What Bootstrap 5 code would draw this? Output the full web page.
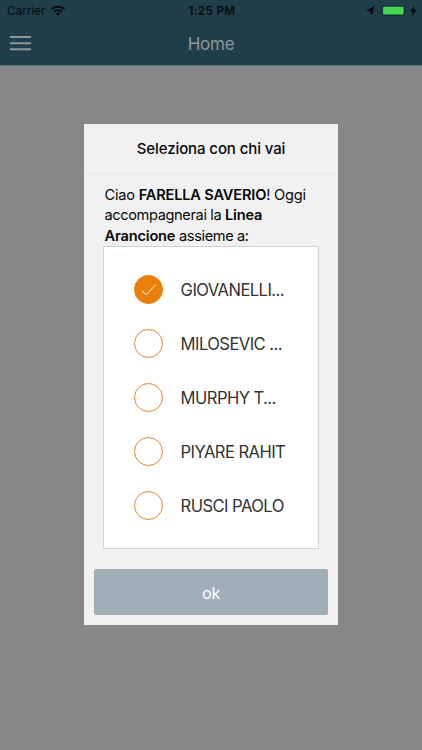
<!DOCTYPE html>
<html lang="it">
<head>
<meta charset="utf-8">
<meta name="viewport" content="width=device-width, initial-scale=1">
<title>Home</title>
<link href="https://cdn.jsdelivr.net/npm/bootstrap@5.3.0/dist/css/bootstrap.min.css" rel="stylesheet">
<style>
body{font-family:Inter,"Liberation Sans",sans-serif;background:#878787;height:750px;overflow:hidden;color:#080808}
.topbar{background:#213f4a;height:66px;border-bottom:1px solid #56707c}
.status{height:22px;font-size:12px;line-height:22px;color:#050b0d;display:grid;grid-template-columns:1fr auto 1fr}
.status-left{padding-left:7px}
.status-right{padding-right:5px}
.carrier{letter-spacing:-.15px}
.wifi{margin-left:6px}
.clock{font-weight:600;letter-spacing:.35px;font-size:11.7px;padding-left:2px}
.titlebar{height:43px;display:grid;grid-template-columns:1fr auto 1fr}
.menu-btn{width:21px;height:15px;margin-left:10px}
.page-title{font-size:17px;line-height:42px;color:#8f979a;letter-spacing:-.25px}
.dialog{width:254px;height:501px;margin:58px auto 0 84px;padding-bottom:10px;background:#f1f1f1}
.dialog-head{height:50px;line-height:50px;font-size:15px;font-weight:500;letter-spacing:-.1px;border-bottom:1px solid #e8e8e8}
.message{padding:11px 0 0 20.5px;height:72px;font-size:14.6px;line-height:20.4px;letter-spacing:-.38px}
.message b{font-weight:600;letter-spacing:-.17px}
.greeting{letter-spacing:-.22px}
.people{margin:0 19px;height:303px;background:#fff;border:1px solid #d2d2d2;padding:16px 0 0 30px}
.person{height:54px;color:#333;font-size:16.6px;letter-spacing:-.57px}
.ring{width:29px;height:29px;margin-bottom:1px;border:1.2px solid #e8872a}
.ring-on{background:#eb7f0b;border-color:#eb7f0b}
.person-name{margin-left:17.6px}
.ok-btn{margin:20px 10px 0;padding:2px 0 0;height:46px;background:#a0aeb7;border-radius:2px;border:0;color:#fff;font-size:16.3px;letter-spacing:-.4px;width:234px}
</style>
</head>
<body>
<header class="topbar">
  <div class="status">
    <div class="status-left d-flex align-items-center">
      <span class="carrier">Carrier</span>
      <svg class="wifi" width="14" height="11" viewBox="0 0 14 11"><path fill="none" stroke="#050b0d" stroke-width="1.9" d="M.6 3.3a9.2 9.2 0 0 1 12.8 0M3 5.9a5.8 5.8 0 0 1 8 0"/><path fill="#050b0d" d="M4.8 7.7a3.2 3.2 0 0 1 4.4 0L7 10z"/></svg>
    </div>
    <span class="clock">1:25 PM</span>
    <div class="status-right d-flex align-items-center justify-content-end">
      <svg width="52" height="14" viewBox="0 0 52 14"><path fill="#050b0d" d="M10 1.4 6.6 11.4 5.4 7.5 1 6.8z"/><rect x="17" y="1.9" width="22.6" height="9.4" rx="2" fill="none" stroke="#102a2c"/><rect x="18" y="2.8" width="20.6" height="7.6" rx="1" fill="#45d450"/><path d="M40.6 5.2V8c1.3-.5 1.3-2.3 0-2.8" fill="#102a2c"/><path fill="#050b0d" d="m49.8 1.2-5 6.2h2.9l-1 4.8 5.2-6.6h-3.2z"/></svg>
    </div>
  </div>
  <div class="titlebar align-items-center">
    <svg class="menu-btn" viewBox="0 0 21 15"><path stroke="#8f979a" stroke-width="2" d="M0 1h21M0 7.2h21M0 13.3h21"/></svg>
    <span class="page-title">Home</span>
  </div>
</header>
<main class="dialog d-flex flex-column">
  <div class="dialog-head text-center">Seleziona con chi vai</div>
  <div class="message"><span class="greeting">Ciao <b>FARELLA SAVERIO</b>! Oggi</span><br>accompagnerai la <b>Linea<br>Arancione</b> assieme a:</div>
  <div class="people">
    <div class="person d-flex align-items-center"><span class="ring ring-on rounded-circle d-flex align-items-center justify-content-center"><svg width="16" height="12" viewBox="0 0 16 12"><path fill="none" stroke="#fff" stroke-width="1" d="m1 6.7 4 4L14.5 1"/></svg></span><span class="person-name">GIOVANELLI...</span></div>
    <div class="person d-flex align-items-center"><span class="ring rounded-circle"></span><span class="person-name">MILOSEVIC ...</span></div>
    <div class="person d-flex align-items-center"><span class="ring rounded-circle"></span><span class="person-name">MURPHY T...</span></div>
    <div class="person d-flex align-items-center"><span class="ring rounded-circle"></span><span class="person-name">PIYARE RAHIT</span></div>
    <div class="person d-flex align-items-center"><span class="ring rounded-circle"></span><span class="person-name">RUSCI PAOLO</span></div>
  </div>
  <button class="ok-btn" type="button">ok</button>
</main>
<script src="https://cdn.jsdelivr.net/npm/bootstrap@5.3.0/dist/js/bootstrap.bundle.min.js"></script>
</body>
</html>
